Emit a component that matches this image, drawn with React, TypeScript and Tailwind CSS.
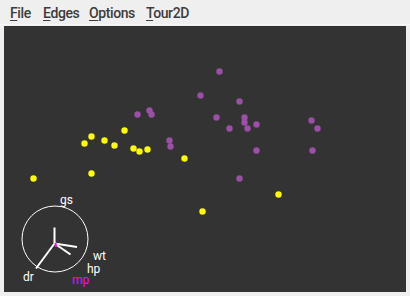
import React from 'react'

const purple: [number, number][] = [
  [219.5, 72.5], [200.5, 96.5], [239.5, 102.5], [216.5, 118.5], [244.5, 118.5],
  [244.5, 123.5], [229.5, 129.5], [247.5, 129.5], [256.5, 125.5], [311.5, 121.5],
  [317.5, 129.5], [256.5, 151.5], [312.5, 151.5], [239.5, 179.5], [137.5, 115.5],
  [149.5, 111.5], [151.5, 115.5], [169.5, 141.5], [170.5, 147.5],
]

const yellow: [number, number][] = [
  [124.5, 131.5], [91.5, 137.5], [84.5, 144.5], [104.5, 141.5], [114.5, 146.5],
  [133.5, 149.5], [139.5, 152.5], [147.5, 150.5], [184.5, 159.5], [33.5, 179.5],
  [91.5, 174.5], [278.5, 195.5], [202.5, 212.5],
]

const menus = [
  { key: 'F', rest: 'ile', w: 'w-[33px]' },
  { key: 'E', rest: 'dges', w: 'w-[46px]' },
  { key: 'O', rest: 'ptions', w: 'w-[57px]' },
  { key: 'T', rest: 'our2D', w: 'w-[60px]' },
]

export default function App() {
  return (
    <div className="w-[410px] h-[296px] bg-[#efefef] flex flex-col overflow-hidden" style={{ fontFamily: 'Roboto, "Noto Sans", sans-serif' }}>
      <div className="h-[25px] flex items-center pl-[10px] text-[14px] tracking-[-0.4px] font-medium text-[#3c3c3c] border-b border-[#f7f7f7]">
        {menus.map(m => (
          <span key={m.key} className={`${m.w} shrink-0 leading-none pt-[1px]`}>
            <span className="underline underline-offset-2 decoration-1">{m.key}</span>
            {m.rest}
          </span>
        ))}
      </div>
      <div className="flex-1 px-[4px] pt-[1px] pb-[3px]">
        <div className="w-full h-[266px] bg-[#333333]">
          <svg width="402" height="266" viewBox="4 27 402 266" className="block">
            {purple.map(([x, y], i) => (
              <circle key={'p' + i} cx={x} cy={y} r="3.2" fill="#9b4fa7" />
            ))}
            {yellow.map(([x, y], i) => (
              <circle key={'y' + i} cx={x} cy={y} r="3.2" fill="#ffff00" />
            ))}
            <circle cx="55" cy="240" r="33" fill="none" stroke="#ffffff" strokeWidth="1" />
            <g stroke="#ffffff" strokeWidth="2" strokeLinecap="butt">
              <line x1="54.5" y1="244.5" x2="54.5" y2="228.5" />
              <line x1="54.5" y1="244.5" x2="36" y2="269.5" />
              <line x1="54.5" y1="244.5" x2="77" y2="248" />
              <line x1="54.5" y1="244.5" x2="70.5" y2="255.5" />
            </g>
            <line x1="55.5" y1="244" x2="56" y2="248" stroke="#ff00ff" strokeWidth="2" />
            <g fontFamily='Roboto, "Noto Sans", sans-serif' fontSize="12">
              <text x="60" y="205" fill="#ffffff">gs</text>
              <text x="93" y="261" fill="#ffffff">wt</text>
              <text x="87" y="274" fill="#ffffff">hp</text>
              <text x="72" y="285" fill="#ff00ff">mp</text>
              <text x="23" y="282" fill="#ffffff">dr</text>
            </g>
          </svg>
        </div>
      </div>
    </div>
  )
}
